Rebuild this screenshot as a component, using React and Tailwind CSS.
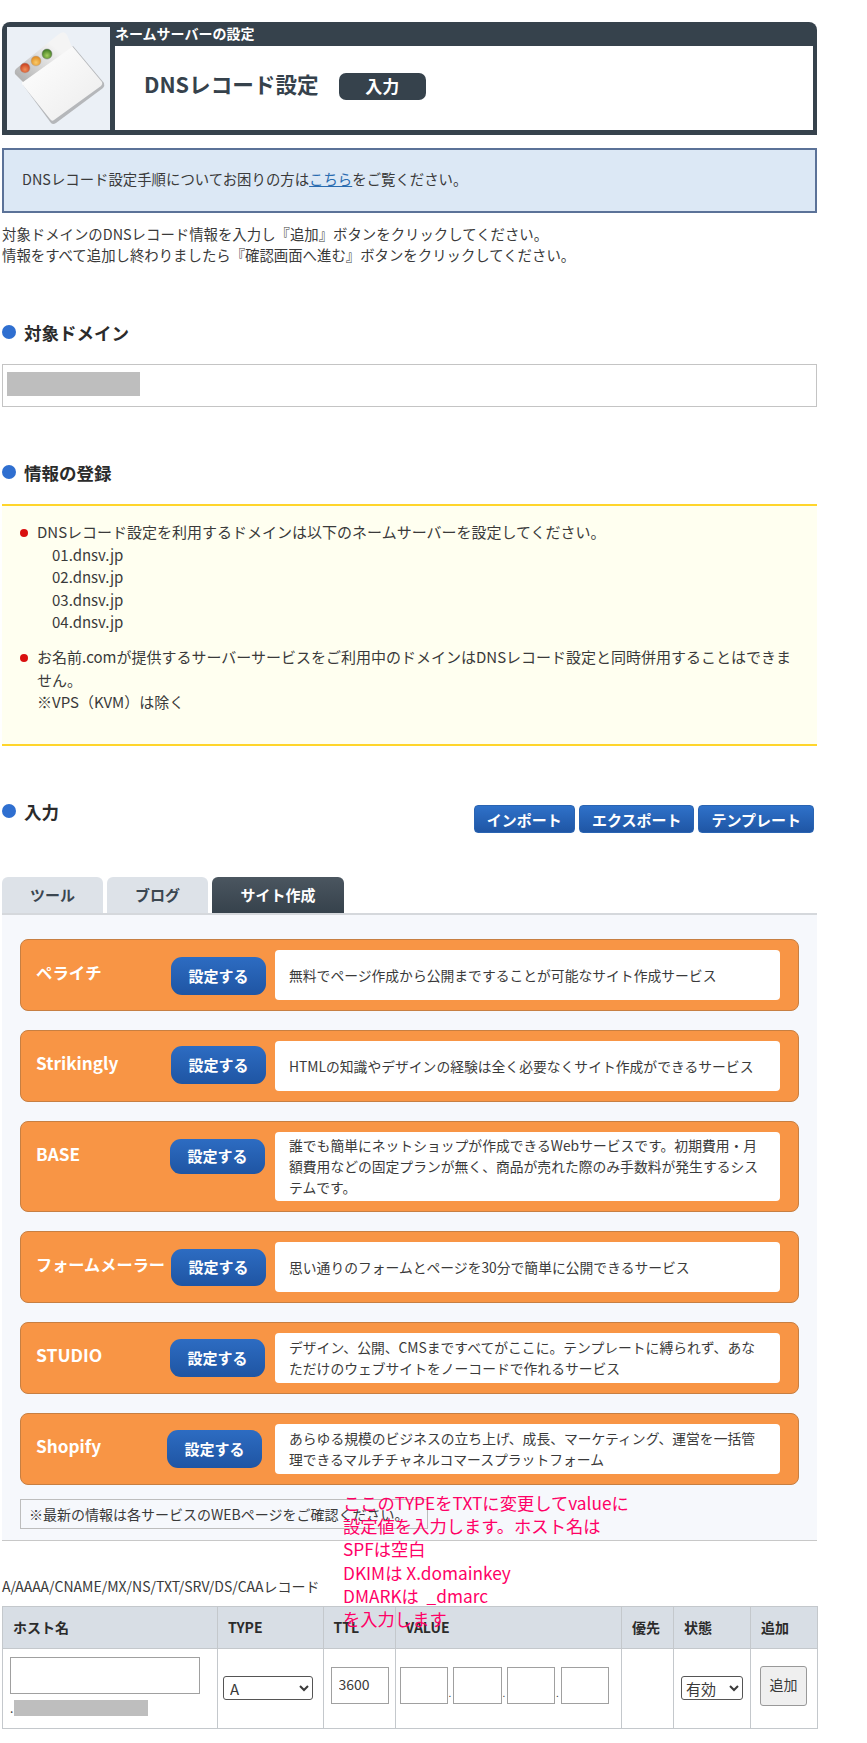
import React from "react";

const services = [
  {
    name: "ペライチ",
    size: "text-[16.4px]",
    desc: "無料でページ作成から公開まですることが可能なサイト作成サービス",
    btn: "mt-[7px] h-[38px]",
    box: "h-[50px]",
  },
  {
    name: "Strikingly",
    size: "text-[17.2px]",
    desc: "HTMLの知識やデザインの経験は全く必要なくサイト作成ができるサービス",
    btn: "mt-[5px] h-[38px]",
    box: "h-[50px]",
  },
  {
    name: "BASE",
    size: "text-[17.2px]",
    desc: "誰でも簡単にネットショップが作成できるWebサービスです。初期費用・月額費用などの固定プランが無く、商品が売れた際のみ手数料が発生するシステムです。",
    btn: "mt-[7px] h-[35px] -ml-[1px]",
    box: "h-[69px]",
  },
  {
    name: "フォームメーラー",
    size: "text-[16.2px]",
    desc: "思い通りのフォームとページを30分で簡単に公開できるサービス",
    btn: "mt-[7px] h-[37px]",
    box: "h-[50px]",
  },
  {
    name: "STUDIO",
    size: "text-[17.5px]",
    desc: "デザイン、公開、CMSまですべてがここに。テンプレートに縛られず、あなただけのウェブサイトをノーコードで作れるサービス",
    btn: "mt-[6px] h-[38px] -ml-[1px]",
    box: "h-[50px]",
  },
  {
    name: "Shopify",
    size: "text-[17.2px]",
    desc: "あらゆる規模のビジネスの立ち上げ、成長、マーケティング、運営を一括管理できるマルチチャネルコマースプラットフォーム",
    btn: "mt-[6px] h-[38px] -ml-[4px]",
    box: "h-[50px]",
  },
];

function WindowIcon() {
  return (
    <svg width="103" height="103" viewBox="0 0 103 103">
      <defs>
        <linearGradient id="body" x1="0" y1="0" x2="1" y2="1">
          <stop offset="0" stopColor="#ffffff" />
          <stop offset="1" stopColor="#ececec" />
        </linearGradient>
        <linearGradient id="bar" x1="0.1" y1="0.9" x2="0.7" y2="0.3">
          <stop offset="0" stopColor="#b4b4b4" />
          <stop offset="0.5" stopColor="#d8d8d8" />
          <stop offset="1" stopColor="#f4f4f4" />
        </linearGradient>
        <radialGradient id="red" cx="0.5" cy="0.65" r="0.6">
          <stop offset="0" stopColor="#f0905a" />
          <stop offset="1" stopColor="#c9401f" />
        </radialGradient>
        <radialGradient id="orange" cx="0.5" cy="0.65" r="0.6">
          <stop offset="0" stopColor="#f8cb6a" />
          <stop offset="1" stopColor="#e08a22" />
        </radialGradient>
        <radialGradient id="green" cx="0.5" cy="0.65" r="0.6">
          <stop offset="0" stopColor="#a6cf5e" />
          <stop offset="1" stopColor="#3f7a24" />
        </radialGradient>
      </defs>
      <path d="M16 58 L44 96 Q46 98 49 96 L96 61 Q98 59 97 56 L66 19 Z" fill="#b5b7ba" />
      <path d="M15 54 L65 19 L95 55 Q96 57 94 59 L47 93 Q45 95 43 92 L15 57Z" fill="url(#body)" />
      <path d="M8 47 Q7 43 10 41 L52 7 Q57 3 60 8 L65 20 L16 55 Z" fill="url(#bar)" />
      <circle cx="18" cy="41" r="5" fill="url(#red)" stroke="#a8a8a8" strokeWidth="0.5" />
      <circle cx="29" cy="34" r="5" fill="url(#orange)" stroke="#a8a8a8" strokeWidth="0.5" />
      <circle cx="40" cy="27" r="5" fill="url(#green)" stroke="#7d7d7d" strokeWidth="0.5" />
    </svg>
  );
}

function SectionTitle({ children }) {
  return (
    <div className="flex items-start">
      <span className="mt-[4px] h-[14px] w-[14px] rounded-full bg-[#2f6fd0]"></span>
      <h2 className="ml-[8px] text-[17.5px] font-bold leading-[24px] text-[#2b2b2b]">{children}</h2>
    </div>
  );
}

function BlueButton({ children }) {
  return (
    <button className="h-[28px] rounded-[4px] border border-[#2a64b2] bg-linear-to-b from-[#2f71c9] to-[#1f56a5] px-[12px] text-[15px] font-bold leading-none text-white">
      {children}
    </button>
  );
}

function ServiceCard({ item }) {
  return (
    <div className="flex items-start rounded-[8px] border border-[#c77f42] bg-[#f89545] py-[10px] pr-[18px] pl-[15px]">
      <div className={`mt-[10px] w-[135px] font-bold leading-[24px] whitespace-nowrap text-white ${item.size}`}>{item.name}</div>
      <button className={`w-[95px] shrink-0 rounded-[11px] bg-linear-to-b from-[#2d6cc2] to-[#1f55a3] text-[15px] font-bold text-white ${item.btn}`}>
        設定する
      </button>
      <div className={`ml-auto flex w-[505px] shrink-0 items-center rounded-[4px] bg-white pr-[16px] pl-[14px] text-[13.8px] leading-[21px] text-[#3a3a3a] ${item.box}`}>
        <p>{item.desc}</p>
      </div>
    </div>
  );
}

export default function App() {
  return (
    <div className="relative min-h-[1743px] w-[867px] bg-white font-['Noto_Sans_CJK_JP',sans-serif] text-[#3a3a3a]">
      <div className="ml-[2px] w-[815px] pt-[22px]">
        {/* Header */}
        <div className="flex rounded-t-[8px] bg-[#36424c] pr-[4px] pl-[5px]">
          <div className="my-[5px] h-[103px] w-[103px] shrink-0 bg-[#ebf0f6]">
            <WindowIcon />
          </div>
          <div className="ml-[5px] flex-1">
            <div className="h-[24px] text-[14px] font-bold leading-[23px] text-white">ネームサーバーの設定</div>
            <div className="mb-[5px] flex h-[84px] items-center bg-white pb-[4px] pl-[29px]">
              <h1 className="mb-[3px] text-[21.6px] font-bold text-[#36424c]">DNSレコード設定</h1>
              <span className="ml-[20px] flex h-[27px] w-[87px] items-center justify-center rounded-[7px] bg-[#36424c] text-[17px] font-bold text-white">
                入力
              </span>
            </div>
          </div>
        </div>

        {/* Notice */}
        <div className="mt-[13px] flex h-[65px] items-center border-2 border-[#5b7298] bg-[#dce8f5] pb-[3px] pl-[18px] text-[14.4px]">
          <p>
            DNSレコード設定手順についてお困りの方は
            <a className="text-[#2a6cb0] underline">こちら</a>
            をご覧ください。
          </p>
        </div>

        <p className="mt-[10px] mb-[56px] text-[14.4px] leading-[21px]">
          対象ドメインのDNSレコード情報を入力し『追加』ボタンをクリックしてください。
          <br />
          情報をすべて追加し終わりましたら『確認画面へ進む』ボタンをクリックしてください。
        </p>

        <SectionTitle>対象ドメイン</SectionTitle>
        <div className="mt-[19px] h-[43px] border border-[#c4c4c4] pt-[7px] pl-[4px]">
          <div className="h-[24px] w-[133px] bg-[#bebebe]"></div>
        </div>

        <div className="mt-[54px]">
          <SectionTitle>情報の登録</SectionTitle>
        </div>
        <div className="mt-[19px] h-[242px] border-y-2 border-[#ffd52b] bg-[#fffff0] pt-[15px] pl-[35px] text-[15px] leading-[22.5px]">
          <div className="relative">
            <span className="absolute top-[8px] -left-[17px] h-[8px] w-[8px] rounded-full bg-[#d9100f]"></span>
            DNSレコード設定を利用するドメインは以下のネームサーバーを設定してください。
            <div className="pl-[15px]">
              <div>01.dnsv.jp</div>
              <div>02.dnsv.jp</div>
              <div>03.dnsv.jp</div>
              <div>04.dnsv.jp</div>
            </div>
          </div>
          <div className="relative mt-[12.5px]">
            <span className="absolute top-[8px] -left-[17px] h-[8px] w-[8px] rounded-full bg-[#d9100f]"></span>
            お名前.comが提供するサーバーサービスをご利用中のドメインはDNSレコード設定と同時併用することはできま
            <br />
            せん。
            <br />
            ※VPS（KVM）は除く
          </div>
        </div>

        {/* Input */}
        <div className="mt-[54px] flex items-start justify-between pr-[3px]">
          <SectionTitle>入力</SectionTitle>
          <div className="mt-[5px] flex gap-[4px]">
            <BlueButton>インポート</BlueButton>
            <BlueButton>エクスポート</BlueButton>
            <BlueButton>テンプレート</BlueButton>
          </div>
        </div>

        <div className="mt-[44px] flex gap-[4px]">
          <div className="flex h-[36px] w-[101px] items-center justify-center rounded-t-[6px] bg-[#dde2e8] text-[15px] font-bold text-[#3b4650]">ツール</div>
          <div className="flex h-[36px] w-[101px] items-center justify-center rounded-t-[6px] bg-[#dde2e8] text-[15px] font-bold text-[#3b4650]">ブログ</div>
          <div className="flex h-[36px] w-[132px] items-center justify-center rounded-t-[6px] bg-linear-to-b from-[#4b5660] to-[#36424c] text-[15px] font-bold text-white">サイト作成</div>
        </div>

        <div className="border-t-2 border-b border-t-[#d5d8dc] border-b-[#c8c8c8] bg-[#f6f8fc] px-[18px] pt-[24px] pb-[11px]">
          <div className="flex flex-col gap-[19px]">
            {services.map((item, index) => (
              <ServiceCard key={index} item={item} />
            ))}
          </div>
          <div className="mt-[14px] flex h-[30px] w-[408px] items-center border border-[#bdbdbd] pl-[8px] text-[14px] whitespace-nowrap">
            ※最新の情報は各サービスのWEBページをご確認ください。
          </div>
        </div>

        <p className="mt-[35px] text-[14px] leading-[21px]">A/AAAA/CNAME/MX/NS/TXT/SRV/DS/CAAレコード</p>

        {/* Record table */}
        <table className="mt-[9px] w-[815px] table-fixed border-collapse text-[14px]">
          <colgroup>
            <col className="w-[215px]" />
            <col className="w-[105.5px]" />
            <col className="w-[72px]" />
            <col className="w-[226.5px]" />
            <col className="w-[52px]" />
            <col className="w-[77px]" />
            <col className="w-[67px]" />
          </colgroup>
          <thead>
            <tr className="h-[42px] bg-[#d8dee5] text-left text-[#2b2b2b]">
              <th className="border border-[#c4c8cc] pl-[10px] font-bold">ホスト名</th>
              <th className="border border-[#c4c8cc] pl-[10px] font-bold">TYPE</th>
              <th className="border border-[#c4c8cc] pl-[10px] font-bold">TTL</th>
              <th className="border border-[#c4c8cc] pl-[10px] font-bold">VALUE</th>
              <th className="border border-[#c4c8cc] pl-[10px] font-bold">優先</th>
              <th className="border border-[#c4c8cc] pl-[10px] font-bold">状態</th>
              <th className="border border-[#c4c8cc] pl-[10px] font-bold">追加</th>
            </tr>
          </thead>
          <tbody>
            <tr className="h-[80px]">
              <td className="border border-[#c4c8cc] pt-[8px] pl-[7px] align-top">
                <input readOnly className="block h-[37px] w-[190px] border border-[#a0a0a0] bg-white" />
                <div className="mt-[6px] flex items-end text-[12px] leading-[16px]">
                  .<span className="ml-[1px] h-[16px] w-[134px] bg-[#bebebe]"></span>
                </div>
              </td>
              <td className="border border-[#c4c8cc] pt-[27px] pl-[5px] align-top">
                <select defaultValue="A" className="h-[24px] w-[90px] rounded-[3px] border border-[#555] bg-white py-0 pl-[2px] text-[15px] leading-none">
                  <option>A</option>
                </select>
              </td>
              <td className="border border-[#c4c8cc] pt-[18px] pl-[7px] align-top">
                <input readOnly defaultValue="3600" className="h-[37px] w-[58px] border border-[#a0a0a0] bg-white pb-[4px] pl-[7px] text-[14px]" />
              </td>
              <td className="border border-[#c4c8cc] pt-[18px] pl-[4px] align-top">
                <div className="flex items-end text-[10px] leading-[22px]">
                  <input readOnly className="h-[37px] w-[48px] border border-[#a0a0a0] bg-white" />
                  <span className="w-[5px] text-center">.</span>
                  <input readOnly className="h-[37px] w-[49px] border border-[#a0a0a0] bg-white" />
                  <span className="w-[5px] text-center">.</span>
                  <input readOnly className="h-[37px] w-[48px] border border-[#a0a0a0] bg-white" />
                  <span className="w-[6px] text-center">.</span>
                  <input readOnly className="h-[37px] w-[48px] border border-[#a0a0a0] bg-white" />
                </div>
              </td>
              <td className="border border-[#c4c8cc]"></td>
              <td className="border border-[#c4c8cc] pt-[27px] pl-[7px] align-top">
                <select defaultValue="有効" className="h-[24px] w-[62px] rounded-[3px] border border-[#555] bg-white py-0 text-[15px] leading-none">
                  <option>有効</option>
                </select>
              </td>
              <td className="border border-[#c4c8cc] pt-[17px] pl-[9px] align-top">
                <button className="h-[40px] w-[47px] rounded-[3px] border border-[#999] bg-[#efefef] pb-[4px] text-[14px]">追加</button>
              </td>
            </tr>
          </tbody>
        </table>
      </div>

      {/* Pink note laid over the page */}
      <div className="pointer-events-none absolute top-[1491px] left-[343px] z-10 whitespace-nowrap text-[17.3px] leading-[23.2px] text-[#ff0066]">
        ここのTYPEをTXTに変更してvalueに
        <br />
        設定値を入力します。ホスト名は
        <br />
        SPFは空白
        <br />
        DKIMは X.domainkey
        <br />
        DMARKは &nbsp;_dmarc
        <br />
        を入力します
      </div>
    </div>
  );
}
